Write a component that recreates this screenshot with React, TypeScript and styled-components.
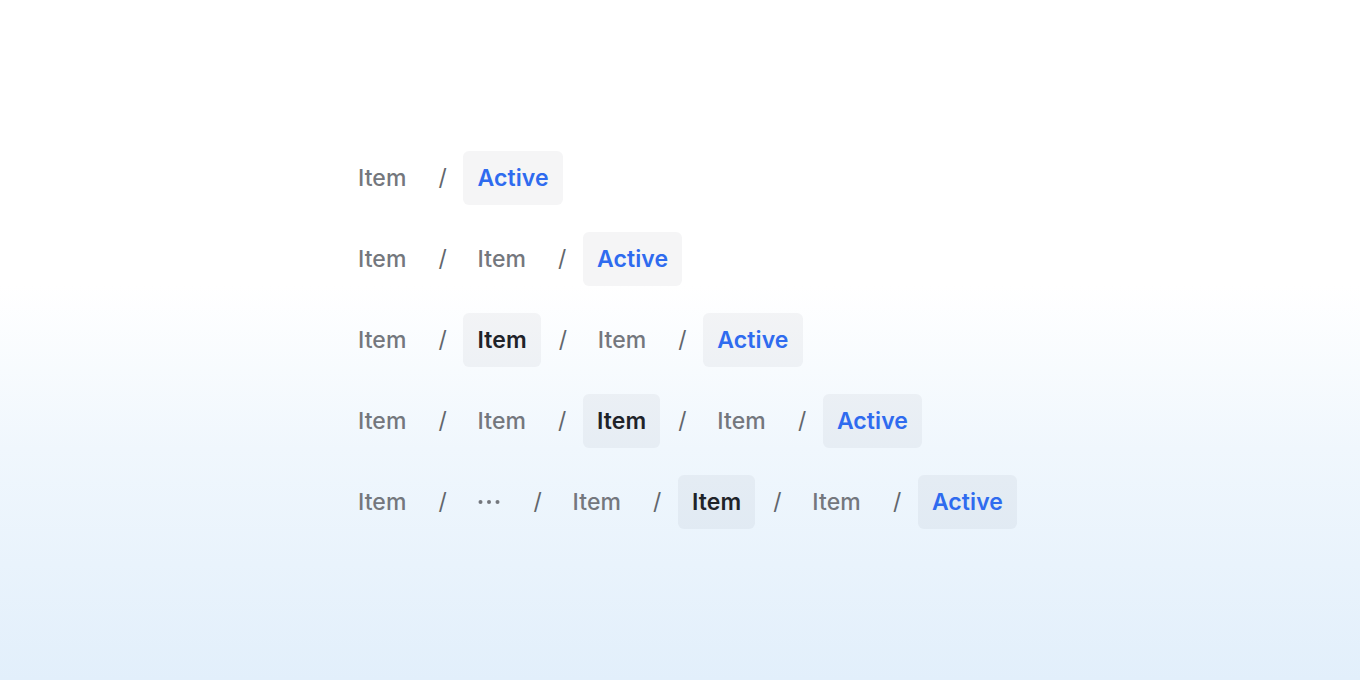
import styled, { createGlobalStyle } from 'styled-components';

const GlobalStyle = createGlobalStyle`
  html, body {
    margin: 0;
    padding: 0;
  }
  body {
    font-family: Inter, 'Noto Sans', sans-serif;
    background: #ffffff;
  }
`;

const Page = styled.div`
  width: 1360px;
  height: 680px;
  display: flex;
  align-items: center;
  justify-content: center;
  background: linear-gradient(to bottom, #ffffff 0%, #ffffff 42%, #f0f7fd 66%, #e2effb 100%);
`;

const Stack = styled.div`
  display: flex;
  flex-direction: column;
  align-items: flex-start;
  gap: 27px;
  margin-left: 1px;
`;

const Trail = styled.nav`
  display: flex;
  align-items: center;
  gap: 18px;
`;

const Crumb = styled.span<{ kind: 'link' | 'current' | 'active' }>`
  display: inline-flex;
  align-items: center;
  justify-content: center;
  height: 54px;
  padding: 0 14px;
  box-sizing: border-box;
  border-radius: 6px;
  font-size: 23px;
  line-height: 1;
  letter-spacing: 0.1px;
  font-weight: ${(p) => (p.kind === 'link' ? 500 : 600)};
  color: ${(p) => (p.kind === 'active' ? '#2f6bef' : p.kind === 'current' ? '#1f2329' : '#74777d')};
  background: ${(p) => (p.kind === 'link' ? 'transparent' : 'rgba(20, 30, 50, 0.045)')};
`;

const Slash = styled.span`
  font-size: 23px;
  font-weight: 400;
  color: #62666c;
  width: 7px;
  text-align: center;
`;

const Dots = styled.svg`
  display: block;
`;

type Part = 'item' | 'current' | 'active' | 'more';

const rows: Part[][] = [
  ['item', 'active'],
  ['item', 'item', 'active'],
  ['item', 'current', 'item', 'active'],
  ['item', 'item', 'current', 'item', 'active'],
  ['item', 'more', 'item', 'current', 'item', 'active'],
];

const renderPart = (part: Part) => {
  if (part === 'more') {
    return (
      <Crumb kind="link">
        <Dots width="24" height="6" viewBox="0 0 24 6">
          <circle cx="3.5" cy="3" r="2" fill="#74777d" />
          <circle cx="12" cy="3" r="2" fill="#74777d" />
          <circle cx="20.5" cy="3" r="2" fill="#74777d" />
        </Dots>
      </Crumb>
    );
  }
  if (part === 'active') return <Crumb kind="active">Active</Crumb>;
  if (part === 'current') return <Crumb kind="current">Item</Crumb>;
  return <Crumb kind="link">Item</Crumb>;
};

const App = () => {
  return (
    <>
      <GlobalStyle />
      <Page>
        <Stack>
          {rows.map((row, i) => (
            <Trail key={i}>
              {row.map((part, j) => (
                <span key={j} style={{ display: 'contents' }}>
                  {j > 0 && <Slash>/</Slash>}
                  {renderPart(part)}
                </span>
              ))}
            </Trail>
          ))}
        </Stack>
      </Page>
    </>
  );
};

export default App;
